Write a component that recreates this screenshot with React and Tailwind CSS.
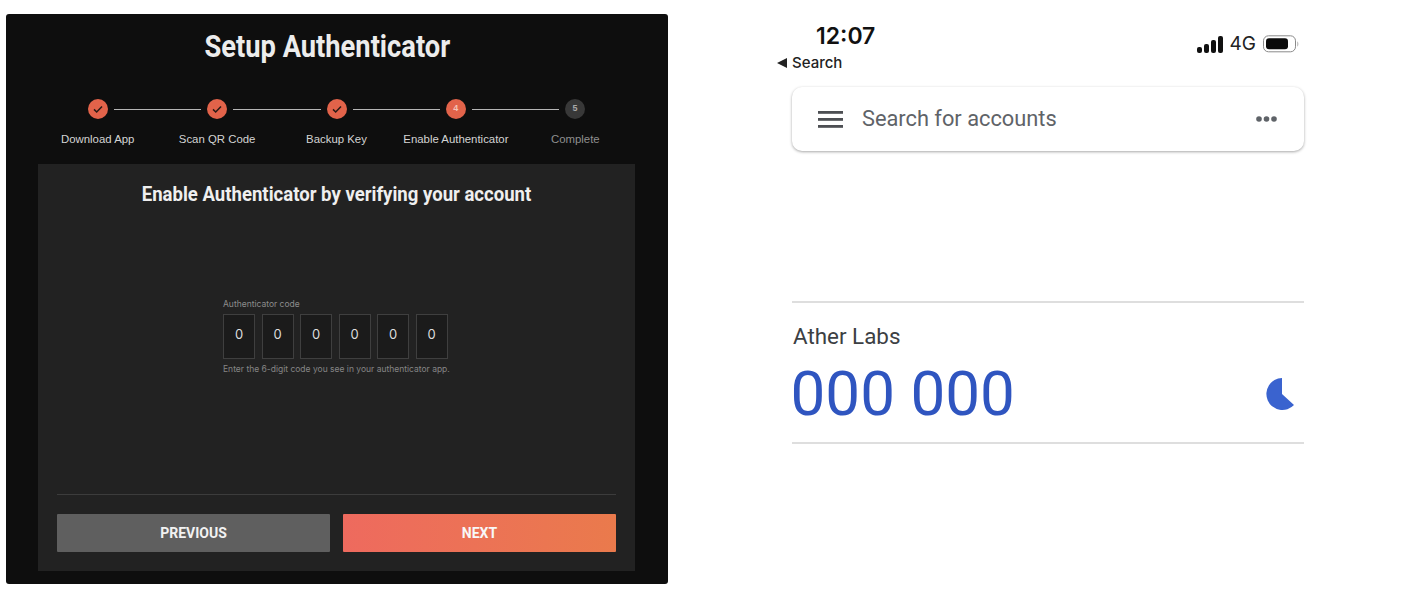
import React from 'react';

const steps = [
  { label: 'Download App', done: true },
  { label: 'Scan QR Code', done: true },
  { label: 'Backup Key', done: true },
  { label: 'Enable Authenticator', num: 4 },
  { label: 'Complete', num: 5, off: true },
];

const StepDot = ({ step }) => {
  if (step.done) {
    return (
      <div className="flex h-5 w-5 shrink-0 items-center justify-center rounded-full bg-[#e2634a]">
        <svg width="12" height="12" viewBox="0 0 12 12" fill="none">
          <path d="M2 6.4 4.7 9 10 3.4" stroke="#2a1a16" strokeWidth="1.5" />
        </svg>
      </div>
    );
  }
  return (
    <div
      className={`flex h-5 w-5 shrink-0 items-center justify-center rounded-full text-[9px] font-bold ${
        step.off ? 'bg-[#383838] text-[#a8a8a8]' : 'bg-[#e2634a] text-[#f3c4b8]'
      }`}
    >
      {step.num}
    </div>
  );
};

const SetupCard = () => (
  <div className="flex h-[570px] w-[662px] flex-col rounded-[3px] bg-[#0e0e0e] pt-[13px] font-['Liberation_Sans',sans-serif]">
    <h1 className="h-[40px] scale-x-[0.88] pr-[22px] text-center font-['Roboto',sans-serif] text-[31px] leading-[40px] font-bold text-[#ececec]">
      Setup Authenticator
    </h1>
    <div className="mt-[32px] mr-[83px] ml-[82px] flex h-5 items-center">
      {steps.map((step, i) => (
        <React.Fragment key={step.label}>
          <StepDot step={step} />
          {i < steps.length - 1 && <div className="mx-[6px] h-px flex-1 bg-[#b5b5b5]" />}
        </React.Fragment>
      ))}
    </div>
    <div className="mt-[13px] mr-[33px] ml-[32px] grid h-[14px] grid-cols-5">
      {steps.map((step) => (
        <div
          key={step.label}
          className={`text-center text-[11.4px] leading-[14px] whitespace-nowrap ${step.off ? 'text-[#8f8f8f]' : 'text-[#d4d4d4]'}`}
        >
          {step.label}
        </div>
      ))}
    </div>
    <div className="mt-[18px] mr-[33px] ml-[32px] flex h-[407px] flex-col bg-[#222222] px-[19px]">
      <h2 className="mt-[15px] h-[30px] scale-x-[0.884] text-center font-['Roboto',sans-serif] text-[21px] leading-[30px] font-bold text-[#efefef]">
        Enable Authenticator by verifying your account
      </h2>
      <div className="mt-[90px] ml-[166px] flex flex-col font-['Inter',sans-serif]">
        <div className="text-[8.5px] leading-[10px] whitespace-nowrap text-[#8c8c8c]">Authenticator code</div>
        <div className="mt-[5px] flex gap-[6.5px]">
          {[0, 1, 2, 3, 4, 5].map((n) => (
            <div
              key={n}
              className="flex h-[45px] w-[32px] items-center justify-center border border-[#3f3f3f] bg-[#1b1b1b] pb-[3px] text-[13px] text-[#dddddd]"
            >
              0
            </div>
          ))}
        </div>
        <div className="mt-[5px] text-[8.5px] leading-[10px] whitespace-nowrap text-[#858585]">
          Enter the 6-digit code you see in your authenticator app.
        </div>
      </div>
      <div className="mt-[120px] h-px bg-[#3c3c3c]" />
      <div className="mt-[19px] flex gap-[13px]">
        <button className="h-[38px] flex-1 rounded-[1px] bg-[#5f5f5f] font-['Roboto',sans-serif] text-[14px] font-bold text-[#f2f2f2]">
          PREVIOUS
        </button>
        <button className="h-[38px] flex-1 rounded-[1px] bg-gradient-to-r from-[#ee6a5e] to-[#ea7a4c] font-['Roboto',sans-serif] text-[14px] font-bold text-[#f8f8f8]">
          NEXT
        </button>
      </div>
    </div>
  </div>
);

const StatusBar = () => (
  <div className="flex h-[44px] items-center justify-between">
    <div className="ml-[39px] font-['Inter',sans-serif] text-[23px] leading-[44px] font-semibold text-[#111111]">12:07</div>
    <div className="mt-[16px] mr-[8px] flex items-center">
      <svg width="26" height="17" viewBox="0 0 26 17" fill="#111">
        <rect x="0" y="11" width="5" height="6" rx="2" />
        <rect x="7" y="8" width="5" height="9" rx="2" />
        <rect x="14" y="4" width="5" height="13" rx="2" />
        <rect x="21" y="0" width="5" height="17" rx="2" />
      </svg>
      <span className="ml-[7px] font-['Inter',sans-serif] text-[19px] text-[#222222]">4G</span>
      <svg className="ml-[7px]" width="36" height="18" viewBox="0 0 36 18" fill="none">
        <rect x="0.5" y="0.8" width="32" height="16" rx="5" stroke="#8a8a8a" />
        <rect x="3" y="3.2" width="22" height="11" rx="3" fill="#0b0b0b" />
        <path d="M34.5 6.5c1 .6 1 4.400 0 5z" fill="#8a8a8a" />
      </svg>
    </div>
  </div>
);

const PhoneScreen = () => (
  <div className="ml-[109px] w-[530px] pt-[14px] font-['Roboto',sans-serif]">
    <StatusBar />
    <div className="-mt-[4px] flex h-[18px] items-center">
      <svg width="10" height="10" viewBox="0 0 10 10" fill="#222">
        <path d="M10 0v10L0 5z" />
      </svg>
      <span className="ml-[5px] font-['Inter',sans-serif] text-[15px] leading-[18px] font-medium text-[#222222]">Search</span>
    </div>
    <div className="ml-[15px] w-[512px]">
      <div className="mt-[15px] flex h-[64px] items-center rounded-[10px] bg-white pr-[27px] pl-[26px] shadow-[0_1px_3px_rgba(0,0,0,0.35)]">
        <svg width="25" height="17" viewBox="0 0 25 17" fill="#4d4f53">
          <rect y="0" width="25" height="2.800" />
          <rect y="7" width="25" height="2.800" />
          <rect y="14" width="25" height="2.800" />
        </svg>
        <span className="ml-[19px] flex-1 text-[21.8px] text-[#5f6368]">Search for accounts</span>
        <svg width="21" height="6" viewBox="0 0 21 6" fill="#5f6368">
          <circle cx="3" cy="3" r="2.800" />
          <circle cx="10.500" cy="3" r="2.800" />
          <circle cx="18" cy="3" r="2.800" />
        </svg>
      </div>
      <div className="mt-[150px] h-[2px] bg-[#dedede]" />
      <div className="border-b-2 border-[#dedede] pt-[18px] pb-[6px]">
        <div className="pl-px text-[22.4px] leading-[30px] text-[#3c4043]">Ather Labs</div>
        <div className="mt-px flex items-center justify-between pr-[5px]">
          <span className="-ml-[1.5px] text-[62px] leading-[84px] text-[#2f55c0]">000 000</span>
          <svg width="34" height="34" viewBox="0 0 34 34">
            <path d="M17 17V1A16 16 0 1 0 29 28z" fill="#3a63cf" />
          </svg>
        </div>
      </div>
    </div>
  </div>
);

export default function App() {
  return (
    <div className="flex h-[596px] w-[1428px] overflow-hidden bg-white">
      <div className="pt-[14px] pl-[6px]">
        <SetupCard />
      </div>
      <PhoneScreen />
    </div>
  );
}
